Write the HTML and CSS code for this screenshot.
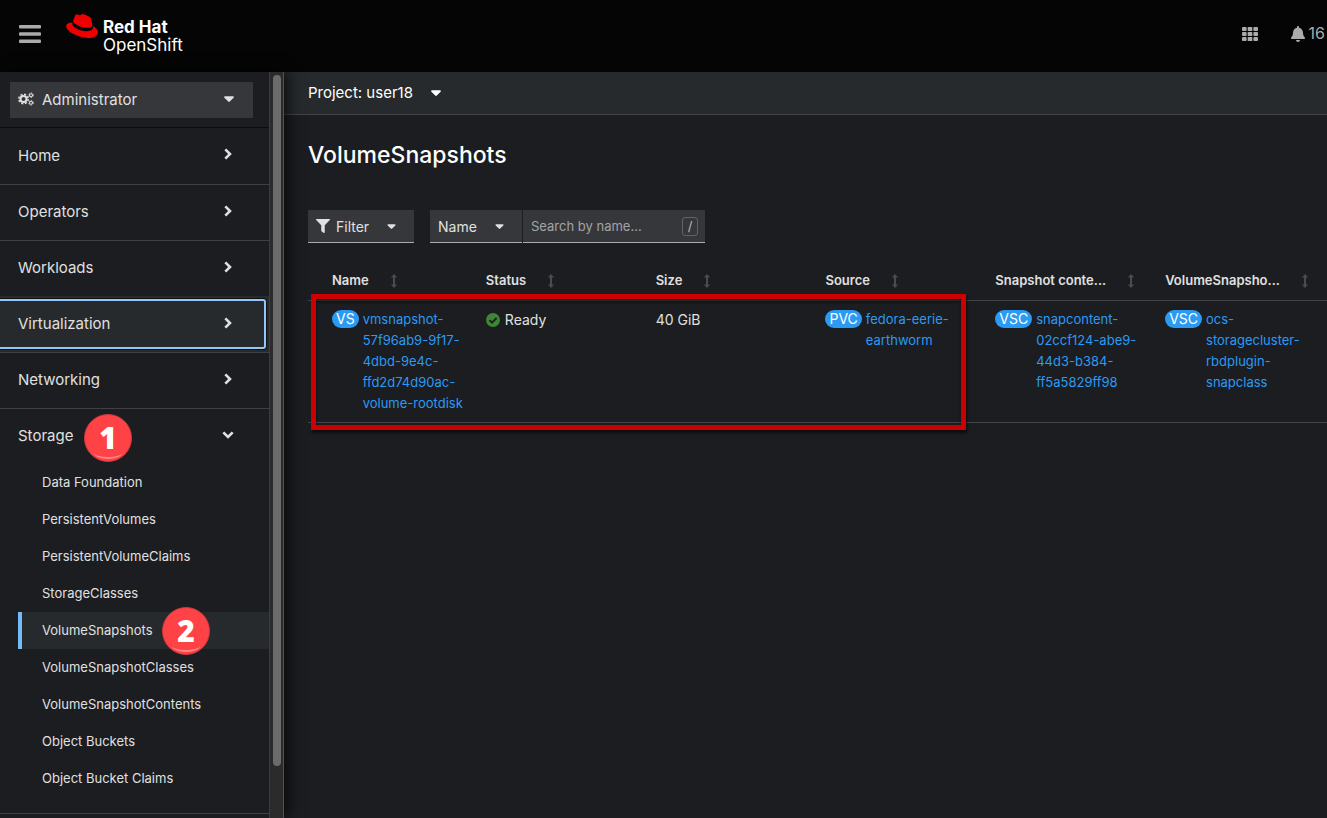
FILE: index.html
```html
<!DOCTYPE html>
<html lang="en">
<head>
<meta charset="utf-8">
<title>VolumeSnapshots · Red Hat OpenShift</title>
<meta name="viewport" content="width=device-width, initial-scale=1">
<link rel="stylesheet" href="styles.css">
</head>
<body>
<svg class="sprite" aria-hidden="true">
  <symbol id="caret" viewBox="0 0 10 6"><path d="M1 .3h8c.8 0 1.200.9.6 1.500L5.800 5.500a1.100 1.100 0 0 1-1.600 0L.4 1.800C-.2 1.200.2.3 1 .3z"/></symbol>
  <symbol id="angle" viewBox="0 0 8 12"><path d="M1.300 1.300 6 6l-4.700 4.700" fill="none" stroke="currentColor" stroke-width="2.600"/></symbol>
  <symbol id="sort" viewBox="0 0 8 14"><path d="M4 0 7.200 3.600H5v6.800h2.200L4 14 .8 10.400H3V3.600H.8z"/></symbol>
</svg>

<header class="masthead">
  <button class="icon-button menu-button" type="button" aria-label="Toggle navigation">
    <svg width="22" height="20" viewBox="0 0 22 20"><rect y="1" width="22" height="3.500" rx="1"/><rect y="8.200" width="22" height="3.500" rx="1"/><rect y="15.500" width="22" height="3.500" rx="1"/></svg>
  </button>
  <a class="brand" href="#">
    <svg class="hat" width="32" height="24" viewBox="0 2.900 24 18.200" aria-hidden="true"><path d="M16.009 13.386c1.577 0 3.860-.326 3.860-2.202a1.765 1.765 0 0 0-.040-.431l-.940-4.080c-.216-.898-.406-1.305-1.982-2.093-1.223-.625-3.888-1.658-4.676-1.658-.733 0-.947.946-1.822.946-.842 0-1.467-.706-2.255-.706-.757 0-1.250.515-1.630 1.576 0 0-1.060 2.990-1.197 3.424a.81.81 0 0 0-.028.245c0 1.162 4.577 4.974 10.710 4.974m4.101-1.435c.218 1.032.218 1.140.218 1.277 0 1.765-1.984 2.745-4.593 2.745-5.895.004-11.060-3.451-11.060-5.734a2.326 2.326 0 0 1 .190-.925C2.746 9.415 0 9.794 0 12.217c0 3.969 9.405 8.861 16.851 8.861 5.710 0 7.149-2.582 7.149-4.620 0-1.605-1.387-3.425-3.887-4.512"/></svg>
    <span class="brand-text"><strong>Red Hat</strong><span>OpenShift</span></span>
  </a>
  <div class="tools">
    <button class="icon-button" type="button" aria-label="Application launcher">
      <svg width="16" height="14" viewBox="0 0 16 14"><g><rect width="4.600" height="4" rx="1"/><rect x="5.700" width="4.600" height="4" rx=".6"/><rect x="11.400" width="4.600" height="4" rx="1"/><rect y="5" width="4.600" height="4" rx="1"/><rect x="5.700" y="5" width="4.600" height="4" rx=".6"/><rect x="11.400" y="5" width="4.600" height="4" rx="1"/><rect y="10" width="4.600" height="4" rx="1"/><rect x="5.700" y="10" width="4.600" height="4" rx=".6"/><rect x="11.400" y="10" width="4.600" height="4" rx="1"/></g></svg>
    </button>
    <button class="icon-button" type="button" aria-label="Notifications, 16">
      <svg width="14" height="16" viewBox="0 0 448 512"><path d="M224 512c35.320 0 63.970-28.650 63.970-64H160.030c0 35.350 28.650 64 63.970 64zm215.390-149.710c-19.320-20.760-55.470-51.990-55.470-154.290 0-77.700-54.480-139.900-127.940-155.160V32c0-17.670-14.320-32-31.980-32s-31.980 14.330-31.980 32v20.840C118.560 68.100 64.080 130.300 64.080 208c0 102.300-36.150 133.530-55.470 154.290-6 6.450-8.660 14.160-8.610 21.710.11 16.400 12.980 32 32.100 32h383.800c19.120 0 32-15.600 32.100-32 .05-7.550-2.610-15.270-8.610-21.710z"/></svg>
      <span>16</span>
    </button>
  </div>
</header>

<div class="page">
  <aside class="sidebar">
    <nav class="nav" aria-label="Main">
      <div class="perspective">
        <button class="perspective-toggle" type="button">
          <svg width="16" height="14" viewBox="0 0 16 14" fill="none" stroke="currentColor"><g fill="none"><circle cx="5.500" cy="7" r="3" stroke-width="2"/><circle cx="5.500" cy="7" r="4.700" stroke-width="1.500" stroke-dasharray="2.100 1.591"/><circle cx="13" cy="3.200" r="1.500" stroke-width="1.100"/><circle cx="13" cy="3.200" r="2.400" stroke-width=".8" stroke-dasharray="1.300 1.213"/><circle cx="13" cy="10.800" r="1.500" stroke-width="1.100"/><circle cx="13" cy="10.800" r="2.400" stroke-width=".8" stroke-dasharray="1.300 1.213"/></g></svg>
          <span>Administrator</span>
          <svg class="caret" width="10" height="6"><use href="#caret"/></svg>
        </button>
      </div>
      <ul class="nav-list">
        <li><button class="nav-item" type="button"><span>Home</span><svg class="angle" width="8" height="12"><use href="#angle"/></svg></button></li>
        <li><button class="nav-item" type="button"><span>Operators</span><svg class="angle" width="8" height="12"><use href="#angle"/></svg></button></li>
        <li class="before-focus"><button class="nav-item" type="button"><span>Workloads</span><svg class="angle" width="8" height="12"><use href="#angle"/></svg></button></li>
        <li><button class="nav-item focused" type="button"><span>Virtualization</span><svg class="angle" width="8" height="12"><use href="#angle"/></svg></button></li>
        <li><button class="nav-item" type="button"><span>Networking</span><svg class="angle" width="8" height="12"><use href="#angle"/></svg></button></li>
        <li class="open">
          <button class="nav-item" type="button" aria-expanded="true"><span>Storage</span><svg class="angle down" width="8" height="12"><use href="#angle"/></svg><b class="step step-one">1</b></button>
          <ul class="subnav">
            <li><a href="#">Data Foundation</a></li>
            <li><a href="#">PersistentVolumes</a></li>
            <li><a href="#">PersistentVolumeClaims</a></li>
            <li><a href="#">StorageClasses</a></li>
            <li><a class="current" href="#" aria-current="page">VolumeSnapshots<b class="step step-two">2</b></a></li>
            <li><a href="#">VolumeSnapshotClasses</a></li>
            <li><a href="#">VolumeSnapshotContents</a></li>
            <li><a href="#">Object Buckets</a></li>
            <li><a href="#">Object Bucket Claims</a></li>
          </ul>
        </li>
      </ul>
    </nav>
    <div class="scroll-track"><div class="scroll-thumb"></div></div>
  </aside>

  <main class="main">
    <div class="project-bar">
      <button class="project-toggle" type="button"><span>Project: user18</span><svg width="10" height="6"><use href="#caret"/></svg></button>
    </div>
    <div class="content">
      <h1>VolumeSnapshots</h1>
      <div class="toolbar">
        <button class="control filter" type="button">
          <svg width="14" height="14" viewBox="0 0 512 512"><path d="M487.976 0H24.028C2.710 0-8.047 25.866 7.058 40.971L192 225.941V432c0 7.831 3.821 15.170 10.237 19.662l80 55.980C298.020 518.690 320 507.493 320 487.980V225.941l184.947-184.970C520.021 25.896 509.338 0 487.976 0z"/></svg>
          <span>Filter</span>
          <svg class="caret" width="9" height="5"><use href="#caret"/></svg>
        </button>
        <div class="search-group">
          <button class="control attribute" type="button"><span>Name</span><svg class="caret" width="9" height="5"><use href="#caret"/></svg></button>
          <label class="control search"><input type="text" placeholder="Search by name..." aria-label="Search by name"><kbd>/</kbd></label>
        </div>
      </div>
      <div class="table-wrap">
        <table>
          <thead>
            <tr>
              <th><button type="button">Name<svg width="8" height="14"><use href="#sort"/></svg></button></th>
              <th><button type="button">Status<svg width="8" height="14"><use href="#sort"/></svg></button></th>
              <th><button type="button">Size<svg width="8" height="14"><use href="#sort"/></svg></button></th>
              <th><button type="button">Source<svg width="8" height="14"><use href="#sort"/></svg></button></th>
              <th><button type="button">Snapshot conte...<svg width="8" height="14"><use href="#sort"/></svg></button></th>
              <th><button type="button">VolumeSnapsho...<svg width="8" height="14"><use href="#sort"/></svg></button></th>
            </tr>
          </thead>
          <tbody>
            <tr>
              <td><div class="resource"><span class="kind">VS</span><a href="#">vmsnapshot-<br>57f96ab9-9f17-<br>4dbd-9e4c-<br>ffd2d74d90ac-<br>volume-rootdisk</a></div></td>
              <td><div class="status"><svg width="14" height="14" viewBox="0 0 14 14"><circle cx="7" cy="7" r="7" fill="#3e8635"/><path d="m3.500 7.200 2.500 2.500 4.600-4.700" fill="none" stroke="#1b1d21" stroke-width="1.900"/></svg>Ready</div></td>
              <td>40 GiB</td>
              <td><div class="resource"><span class="kind">PVC</span><a href="#">fedora-eerie-<br>earthworm</a></div></td>
              <td><div class="resource"><span class="kind">VSC</span><a href="#">snapcontent-<br>02ccf124-abe9-<br>44d3-b384-<br>ff5a5829ff98</a></div></td>
              <td><div class="resource"><span class="kind">VSC</span><a href="#">ocs-<br>storagecluster-<br>rbdplugin-<br>snapclass</a></div></td>
            </tr>
          </tbody>
        </table>
        <div class="highlight"></div>
      </div>
    </div>
  </main>
</div>
</body>
</html>
```
FILE: styles.css
```css
* { box-sizing: border-box; }

body {
  margin: 0;
  min-height: 100vh;
  display: flex;
  flex-direction: column;
  background: #1b1d21;
  color: #e0e0e0;
  font: 14px/21px Inter, "Liberation Sans", sans-serif;
}

button, input { font: inherit; color: inherit; }
button { background: none; border: 0; padding: 0; text-align: left; cursor: pointer; }
a { text-decoration: none; }
ul { list-style: none; margin: 0; padding: 0; }
svg { fill: currentColor; flex: none; display: block; }
.sprite { position: absolute; width: 0; height: 0; }

/* Masthead */
.masthead {
  height: 72px;
  display: flex;
  align-items: center;
  padding: 0 2px 5px 19px;
  background: #050505;
}
.icon-button { display: flex; align-items: center; gap: 4px; color: #aaabac; font-size: 16px; }
.brand { display: flex; align-items: flex-start; gap: 5px; margin-left: 25px; color: #fff; }
.hat { fill: #ee0000; }
.brand-text {
  display: flex;
  flex-direction: column;
  padding-top: 4px;
  font-size: 17px;
  line-height: 18px;
}
.tools { display: flex; gap: 33px; margin-left: auto; }

/* Sidebar */
.page { flex: 1; display: flex; }
.sidebar {
  position: relative;
  z-index: 1;
  width: 284px;
  flex: none;
  display: flex;
  box-shadow: 4px 0 14px rgba(0, 0, 0, .7);
  border-right: 1px solid #515254;
  background: #1b1d21;
}
.nav { flex: 1; }
.scroll-track { width: 14px; padding: 3px 2px 0 3px; background: #2b2b2b; border-left: 1px solid #3d3d3d; }
.scroll-thumb { height: 93%; border-radius: 4px; background: #6b6b6b; }

.perspective { padding: 10px 16px 9px 10px; border-bottom: 1px solid #0c0d0f; }
.perspective-toggle {
  width: 100%;
  height: 36px;
  display: flex;
  align-items: center;
  gap: 8px;
  padding: 0 19px 2px 8px;
  background: #36373a;
  font-size: 15px;
}
.perspective-toggle .caret { margin-left: auto; }

.nav-list > li { border-bottom: 1px solid #3f4144; }
.nav-list > .before-focus { border-color: #262a2c; }
.nav-item {
  position: relative;
  width: 100%;
  height: 55px;
  display: flex;
  align-items: center;
  padding: 0 37px 2px 18px;
  font-size: 15px;
}
.nav-list > li:first-child .nav-item { height: 56px; }
.nav-item .angle { margin: 0 0 2px auto; }
.nav-item .down { transform: rotate(90deg); }
.focused { background: #262a2c; outline: 0; }
.focused::after {
  content: "";
  position: absolute;
  inset: 2px 3px 3px -3px;
  border: 2px solid #92c5f9;
  border-radius: 3px;
  box-shadow: 0 0 0 1px #101112;
}

.open { padding-bottom: 16px; }
.subnav { padding-left: 18px; font-size: 13px; }
.subnav a {
  position: relative;
  display: block;
  padding: 8px 20px;
  border-left: 4px solid transparent;
  color: #e0e0e0;
}
.subnav .current { border-color: #73bcf7; background: #262a2c; }

.step {
  position: absolute;
  width: 48px;
  height: 48px;
  border: 1px solid #c9393d;
  border-radius: 50%;
  background: #ff4245;
  color: #fff;
  font: 900 30px/46px "Noto Sans", sans-serif;
  text-align: center;
}
.step::after {
  content: "";
  position: absolute;
  left: 9px;
  right: 9px;
  bottom: 2px;
  height: 10px;
  border-bottom: 2px solid #ff8587;
  border-radius: 50%;
}
.step-one { left: 84px; top: 5px; }
.step-two { left: 140px; top: -5px; }

/* Main */
.main { flex: 1; min-width: 0; }
.project-bar {
  padding: 10px 24px 11px;
  background: #262a2c;
  border-bottom: 1px solid #444548;
  color: #fff;
}
.project-toggle { display: flex; align-items: center; gap: 18px; font-size: 15px; }
.content { padding: 23px 0 0 24px; }
h1 { margin: 0 0 38px; color: #fff; font-size: 23px; line-height: 34px; font-weight: 500; }

.toolbar { display: flex; gap: 16px; margin-bottom: 19px; }
.search-group { display: flex; gap: 1px; }
.control {
  height: 33px;
  display: flex;
  align-items: center;
  padding: 0 8px;
  background: #36373a;
  border-bottom: 1px solid #a9abad;
}
.filter { width: 106px; gap: 6px; }
.filter .caret { margin: 0 10px 0 auto; }
.attribute { width: 92px; }
.attribute .caret { margin: 0 10px 0 auto; }
.search { width: 182px; padding-right: 7px; }
.search input { flex: 1; min-width: 0; padding: 0; background: none; border: 0; outline: 0; font-size: 13px; }
.search input::placeholder { color: #a3a4a6; opacity: 1; }
kbd {
  width: 16px;
  height: 19px;
  border: 1px solid #606265;
  border-radius: 3px;
  color: #b8babc;
  font: 13px/17px Inter, sans-serif;
  text-align: center;
}

.table-wrap { position: relative; }
table { width: 100%; table-layout: fixed; border-collapse: collapse; }
tr { border-bottom: 1px solid #444548; }
th, td { padding: 8px 0 8px 8px; text-align: left; vertical-align: top; }
th { padding-bottom: 9px; }
th:first-child, td:first-child { padding-left: 24px; }
th button { display: flex; align-items: center; gap: 21px; font-size: 13px; font-weight: 600; white-space: nowrap; }
th svg { color: #4a4b4e; }
.resource { display: flex; align-items: flex-start; gap: 4px; }
.resource a { color: #2b9af3; font-size: 13px; }
.kind {
  margin-top: 1px;
  padding: 0 4px;
  border-radius: 9px;
  background: #2b9af3;
  color: #fff;
  line-height: 18px;
}
.status { display: flex; align-items: center; gap: 5px; }
.highlight {
  position: absolute;
  left: 3px;
  top: 32px;
  bottom: -7px;
  width: calc(100% * 4 / 6 - 24px);
  border: 5px solid #cc0000;
  box-shadow: 1px 3px 3px rgba(0, 0, 0, .6), inset 0 3px 3px rgba(0, 0, 0, .5);
  pointer-events: none;
}
```
